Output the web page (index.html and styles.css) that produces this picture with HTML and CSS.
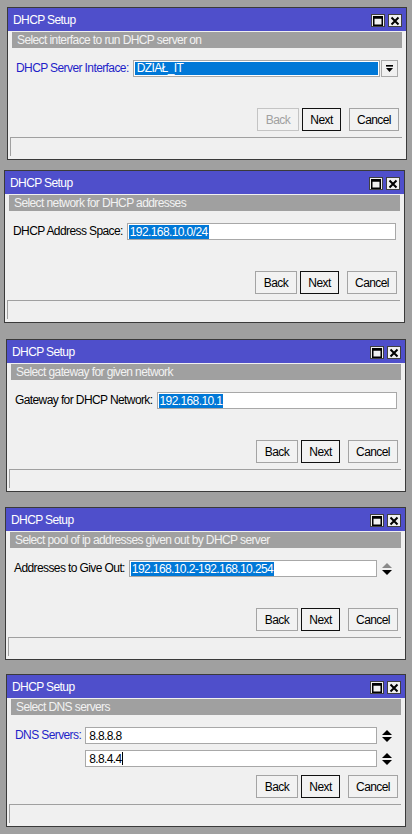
FILE: index.html
```html
<!DOCTYPE html>
<html lang="en">
<head>
<meta charset="utf-8">
<title>DHCP Setup</title>
<link rel="stylesheet" href="styles.css">
</head>
<body>
<main class="desk">

  <section class="win w1">
    <header class="titlebar">
      <span class="title">DHCP Setup</span>
      <span class="tbtns">
        <span class="tbtn"><svg width="10" height="10" viewBox="0 0 10 10"><rect x="0.75" y="0.75" width="8.5" height="8.5" fill="none" stroke="#000" stroke-width="1.5"/><rect x="0.75" y="0.75" width="8.5" height="2" fill="#000"/></svg></span>
        <span class="tbtn"><svg width="10" height="10" viewBox="0 0 10 10"><path d="M1.5 1.5 L8.5 8.5 M8.5 1.5 L1.5 8.5" stroke="#000" stroke-width="2" fill="none"/></svg></span>
      </span>
    </header>
    <div class="band">Select interface to run DHCP server on</div>
    <div class="form">
      <span class="lbl blue">DHCP Server Interface:</span>
      <div class="field combo"><span class="ctext">DZIAŁ_IT</span></div>
      <span class="combo-btn"><svg width="9" height="8" viewBox="0 0 9 8"><rect x="1" y="0" width="7" height="1.6" fill="#000"/><path d="M1 3 H8 L4.5 7 Z" fill="#000"/></svg></span>
    </div>
    <div class="actions">
      <button class="btn back disabled">Back</button>
      <button class="btn next">Next</button>
      <button class="btn cancel">Cancel</button>
    </div>
    <div class="status"></div>
  </section>

  <section class="win w2">
    <header class="titlebar">
      <span class="title">DHCP Setup</span>
      <span class="tbtns">
        <span class="tbtn"><svg width="10" height="10" viewBox="0 0 10 10"><rect x="0.75" y="0.75" width="8.5" height="8.5" fill="none" stroke="#000" stroke-width="1.5"/><rect x="0.75" y="0.75" width="8.5" height="2" fill="#000"/></svg></span>
        <span class="tbtn"><svg width="10" height="10" viewBox="0 0 10 10"><path d="M1.5 1.5 L8.5 8.5 M8.5 1.5 L1.5 8.5" stroke="#000" stroke-width="2" fill="none"/></svg></span>
      </span>
    </header>
    <div class="band">Select network for DHCP addresses</div>
    <div class="form">
      <span class="lbl">DHCP Address Space:</span>
      <div class="field"><span class="sel">192.168.10.0/24</span></div>
    </div>
    <div class="actions">
      <button class="btn back">Back</button>
      <button class="btn next">Next</button>
      <button class="btn cancel">Cancel</button>
    </div>
    <div class="status"></div>
  </section>

  <section class="win w3">
    <header class="titlebar">
      <span class="title">DHCP Setup</span>
      <span class="tbtns">
        <span class="tbtn"><svg width="10" height="10" viewBox="0 0 10 10"><rect x="0.75" y="0.75" width="8.5" height="8.5" fill="none" stroke="#000" stroke-width="1.5"/><rect x="0.75" y="0.75" width="8.5" height="2" fill="#000"/></svg></span>
        <span class="tbtn"><svg width="10" height="10" viewBox="0 0 10 10"><path d="M1.5 1.5 L8.5 8.5 M8.5 1.5 L1.5 8.5" stroke="#000" stroke-width="2" fill="none"/></svg></span>
      </span>
    </header>
    <div class="band">Select gateway for given network</div>
    <div class="form">
      <span class="lbl">Gateway for DHCP Network:</span>
      <div class="field"><span class="sel">192.168.10.1</span></div>
    </div>
    <div class="actions">
      <button class="btn back">Back</button>
      <button class="btn next">Next</button>
      <button class="btn cancel">Cancel</button>
    </div>
    <div class="status"></div>
  </section>

  <section class="win w4">
    <header class="titlebar">
      <span class="title">DHCP Setup</span>
      <span class="tbtns">
        <span class="tbtn"><svg width="10" height="10" viewBox="0 0 10 10"><rect x="0.75" y="0.75" width="8.5" height="8.5" fill="none" stroke="#000" stroke-width="1.5"/><rect x="0.75" y="0.75" width="8.5" height="2" fill="#000"/></svg></span>
        <span class="tbtn"><svg width="10" height="10" viewBox="0 0 10 10"><path d="M1.5 1.5 L8.5 8.5 M8.5 1.5 L1.5 8.5" stroke="#000" stroke-width="2" fill="none"/></svg></span>
      </span>
    </header>
    <div class="band">Select pool of ip addresses given out by DHCP server</div>
    <div class="form">
      <span class="lbl">Addresses to Give Out:</span>
      <div class="field"><span class="sel">192.168.10.2-192.168.10.254</span></div>
      <span class="spin"><svg width="10" height="12" viewBox="0 0 10 12"><path d="M0 5 L5 0 L10 5 Z" fill="#8a8a8a"/><path d="M0 7 L10 7 L5 12 Z" fill="#000"/></svg></span>
    </div>
    <div class="actions">
      <button class="btn back">Back</button>
      <button class="btn next">Next</button>
      <button class="btn cancel">Cancel</button>
    </div>
    <div class="status"></div>
  </section>

  <section class="win w5">
    <header class="titlebar">
      <span class="title">DHCP Setup</span>
      <span class="tbtns">
        <span class="tbtn"><svg width="10" height="10" viewBox="0 0 10 10"><rect x="0.75" y="0.75" width="8.5" height="8.5" fill="none" stroke="#000" stroke-width="1.5"/><rect x="0.75" y="0.75" width="8.5" height="2" fill="#000"/></svg></span>
        <span class="tbtn"><svg width="10" height="10" viewBox="0 0 10 10"><path d="M1.5 1.5 L8.5 8.5 M8.5 1.5 L1.5 8.5" stroke="#000" stroke-width="2" fill="none"/></svg></span>
      </span>
    </header>
    <div class="band">Select DNS servers</div>
    <div class="form">
      <span class="lbl blue">DNS Servers:</span>
      <div class="field"><span class="txt">8.8.8.8</span></div>
      <span class="spin"><svg width="10" height="12" viewBox="0 0 10 12"><path d="M0 5 L5 0 L10 5 Z" fill="#000"/><path d="M0 7 L10 7 L5 12 Z" fill="#000"/></svg></span>
      <div class="field col2"><span class="txt">8.8.4.4</span><span class="caret"></span></div>
      <span class="spin"><svg width="10" height="12" viewBox="0 0 10 12"><path d="M0 5 L5 0 L10 5 Z" fill="#000"/><path d="M0 7 L10 7 L5 12 Z" fill="#000"/></svg></span>
    </div>
    <div class="actions">
      <button class="btn back">Back</button>
      <button class="btn next">Next</button>
      <button class="btn cancel">Cancel</button>
    </div>
    <div class="status"></div>
  </section>

</main>
</body>
</html>
```

FILE: styles.css
```css
* { box-sizing: border-box; margin: 0; padding: 0; }

html, body { background: #a0a0a0; }

body {
  margin: 0;
  font-family: "Liberation Sans", Arial, sans-serif;
  font-size: 12px;
  letter-spacing: -0.6px;
  color: #000;
  height: 834px;
  overflow: hidden;
}

.desk {
  display: flex;
  flex-direction: column;
  align-items: flex-start;
  padding-top: 7px;
}

.win {
  width: 400px;
  height: 153px;
  border: 1px solid #3a3a3a;
  background: #f0f0f0;
  display: flex;
  flex-direction: column;
}

.w1 { margin-left: 7px; }
.w2 { margin-left: 4px; margin-top: 10px; width: 401px; }
.w3 { margin-left: 6px; margin-top: 16px; }
.w4 { margin-left: 5px; margin-top: 15px; width: 401px; }
.w5 { margin-left: 6px; margin-top: 14px; }

.titlebar {
  height: 23px;
  flex: none;
  background: #4f4fcb;
  color: #fff;
  display: flex;
  align-items: center;
  justify-content: space-between;
  padding: 0 4px 0 5px;
}

.title { line-height: 23px; padding-top: 1px; }

.tbtns { display: flex; gap: 3px; margin-top: 2px; }

.tbtn {
  width: 14px;
  height: 13px;
  background: #f0f0f0;
  border: 1px solid #404040;
  display: flex;
  align-items: center;
  justify-content: center;
}

.band {
  flex: none;
  margin: 1px 4px 0;
  height: 16px;
  background: #a0a0a0;
  color: #f2f2f2;
  padding-left: 5px;
  line-height: 16px;
  white-space: nowrap;
}

.form {
  flex: none;
  height: 60px;
  padding: 12px 8px 0 8px;
  display: grid;
  grid-template-columns: auto 1fr auto;
  grid-auto-rows: 17px;
  row-gap: 6px;
  align-content: start;
  align-items: center;
}

.lbl {
  padding-right: 4px;
  white-space: nowrap;
  line-height: 17px;
}

.blue { color: #1f1fc8; }

.field {
  height: 17px;
  border: 1px solid #a8a8a8;
  background: #fff;
  padding-left: 1px;
  display: flex;
  align-items: center;
  white-space: nowrap;
  overflow: hidden;
}

.field.col2 { grid-column: 2; }

.field.combo {
  background: #0078d7;
  box-shadow: inset 0 0 0 1px #fff;
  color: #fff;
  padding-left: 3px;
}

.ctext { line-height: 15px; padding-bottom: 1px; }

.sel {
  background: #0078d7;
  color: #fff;
  line-height: 14px;
  padding: 0 1px;
}

.txt { padding-left: 2px; line-height: 14px; }

.caret {
  display: inline-block;
  width: 1px;
  height: 13px;
  background: #000;
}

.combo-btn {
  width: 17px;
  height: 17px;
  margin-left: 1px;
  border: 1px solid #a8a8a8;
  background: #f0f0f0;
  display: flex;
  align-items: center;
  justify-content: center;
}

.spin {
  width: 20px;
  height: 17px;
  display: flex;
  align-items: center;
  justify-content: center;
}

.actions {
  flex: none;
  height: 23px;
  display: flex;
  justify-content: flex-end;
  padding-right: 7px;
}

.btn {
  height: 23px;
  font: inherit;
  letter-spacing: inherit;
  color: #000;
  background: #f2f2f2;
  border: 1px solid #a4a4a4;
  border-radius: 0;
}

.back { width: 42px; }
.next { width: 39px; margin-left: 3px; border-color: #111; }
.cancel { width: 50px; margin-left: 8px; }

.back.disabled { color: #a0a0a0; border-color: #c4c4c4; }

.status {
  flex: none;
  height: 19px;
  margin: 6px 4px 0 2px;
  border-top: 1px solid #a0a0a0;
  border-left: 1px solid #a0a0a0;
  background: #f0f0f0;
}
```
